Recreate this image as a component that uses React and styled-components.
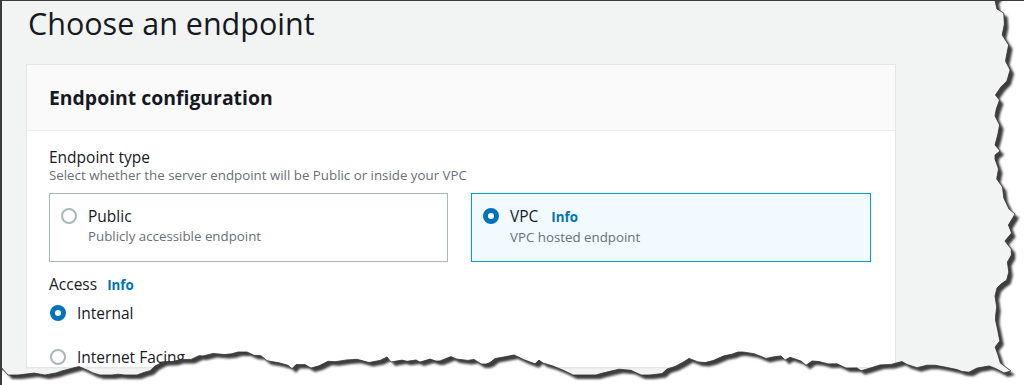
import React from 'react'
import styled, { createGlobalStyle } from 'styled-components'

const GlobalStyle = createGlobalStyle`
  html, body {
    margin: 0;
    padding: 0;
    background: #ffffff;
  }
  body {
    font-family: "Open Sans", "Liberation Sans", Arial, sans-serif;
    color: #16191f;
  }
`

const Screen = styled.div`
  position: relative;
  width: 1024px;
  height: 385px;
  box-sizing: border-box;
  overflow: hidden;
  background: #f2f3f3;
  border-top: 1px solid #3a3a3a;
  border-left: 2px solid #3a3a3a;
`

const Title = styled.h1`
  margin: 0;
  padding: 0 0 0 26px;
  height: 64px;
  line-height: 44px;
  font-size: 30.5px;
  font-weight: 400;
  color: #16191f;
`

const Card = styled.section`
  margin-left: 25px;
  width: 868px;
  background: #ffffff;
  box-shadow: 0 0 0 1px #e4e6e6, 0 1px 1px rgba(0, 28, 36, 0.15);
`

const CardHeader = styled.div`
  height: 66px;
  box-sizing: border-box;
  padding: 0 22px;
  display: flex;
  align-items: center;
  background: #fafafa;
  border-bottom: 1px solid #eaeded;
  font-size: 19.4px;
  font-weight: 700;
  color: #16191f;
`

const CardBody = styled.div`
  padding: 16px 22px 0;
  display: flex;
  flex-direction: column;
`

const FieldLabel = styled.div`
  display: flex;
  align-items: baseline;
  gap: 10px;
  font-size: 15.5px;
  line-height: 20px;
  color: #16191f;
`

const FieldHint = styled.div`
  font-size: 13.3px;
  line-height: 16px;
  color: #687078;
`

const Info = styled.span`
  font-size: 13.3px;
  font-weight: 700;
  color: #0073bb;
`

const Tiles = styled.div`
  margin-top: 10px;
  display: grid;
  grid-template-columns: 399px 400px;
  gap: 23px;
`

const Tile = styled.div`
  height: 69px;
  box-sizing: border-box;
  padding: 11px 12px 0 11px;
  display: flex;
  gap: 11px;
  border: 1px solid ${({ $selected }) => ($selected ? '#00a1c9' : '#aab7b8')};
  background: ${({ $selected }) => ($selected ? '#f1faff' : '#ffffff')};
`

const Radio = styled.span`
  flex: none;
  width: 16px;
  height: 16px;
  margin-top: ${({ $offset }) => $offset ?? 2}px;
  box-sizing: border-box;
  border-radius: 50%;
  background: #ffffff;
  border: ${({ $checked }) => ($checked ? '5px solid #0073bb' : '2px solid #aab7b8')};
`

const TileText = styled.div`
  display: flex;
  flex-direction: column;
`

const TileTitle = styled.div`
  display: flex;
  align-items: baseline;
  gap: 13px;
  font-size: 15.5px;
  line-height: 22px;
  color: #16191f;
`

const TileHint = styled(FieldHint)`
  line-height: 18px;
`

const AccessBlock = styled.div`
  margin-top: 12px;
  display: flex;
  flex-direction: column;
`

const Option = styled.label`
  margin-top: ${({ $gap }) => $gap}px;
  padding-left: 1px;
  display: flex;
  align-items: flex-start;
  gap: 11px;
  font-size: 15.5px;
  line-height: 20px;
  color: #16191f;
`

const Torn = styled.svg`
  position: absolute;
  top: -1px;
  left: -2px;
  pointer-events: none;
`

function makeEdge() {
  let s = 7919
  const rnd = () => {
    s = (s * 16807) % 2147483647
    return s / 2147483647
  }
  const pts = []
  let x = 999
  for (let y = 0; y < 368; y += 4 + Math.floor(rnd() * 8)) {
    x += (rnd() - 0.5) * 14
    x = Math.max(995, Math.min(1019, x))
    pts.push([x, y])
  }
  pts.push([1011, 371])
  let y = 371
  for (let px = 1004; px > 0; px -= 4 + Math.floor(rnd() * 9)) {
    y += (rnd() - 0.5) * 10
    y = Math.max(352, Math.min(375, y))
    pts.push([px, y])
  }
  pts.push([0, 366])
  return 'M -5 -5 L 999 -5 ' + pts.map(([a, b]) => `L ${a.toFixed(1)} ${b.toFixed(1)}`).join(' ') + ' L -5 366 Z'
}

const edge = makeEdge()

function TornEdge() {
  return (
    <Torn width="1024" height="385" viewBox="0 0 1024 385">
      <defs>
        <mask id="outside">
          <rect x="0" y="0" width="1024" height="385" fill="#fff" />
          <path d={edge} fill="#000" />
        </mask>
        <filter id="blur" x="-5%" y="-5%" width="110%" height="110%">
          <feGaussianBlur stdDeviation="1.3" />
        </filter>
      </defs>
      <g mask="url(#outside)">
        <rect x="0" y="0" width="1024" height="385" fill="#fff" />
        <path d={edge} fill="#3c3c3c" transform="translate(4 4)" filter="url(#blur)" />
      </g>
      <path d={edge} fill="none" stroke="#333" strokeWidth="0.8" />
    </Torn>
  )
}

export default function App() {
  return (
    <>
      <GlobalStyle />
      <Screen>
        <Title>Choose an endpoint</Title>
        <Card>
          <CardHeader>Endpoint configuration</CardHeader>
          <CardBody>
            <FieldLabel>Endpoint type</FieldLabel>
            <FieldHint>Select whether the server endpoint will be Public or inside your VPC</FieldHint>
            <Tiles>
              <Tile>
                <Radio $offset={3} />
                <TileText>
                  <TileTitle>Public</TileTitle>
                  <TileHint>Publicly accessible endpoint</TileHint>
                </TileText>
              </Tile>
              <Tile $selected>
                <Radio $checked $offset={3} />
                <TileText>
                  <TileTitle>
                    VPC <Info>Info</Info>
                  </TileTitle>
                  <TileHint>VPC hosted endpoint</TileHint>
                </TileText>
              </Tile>
            </Tiles>
            <AccessBlock>
              <FieldLabel>
                Access <Info>Info</Info>
              </FieldLabel>
              <Option $gap={8}>
                <Radio $checked />
                Internal
              </Option>
              <Option $gap={24}>
                <Radio />
                Internet Facing
              </Option>
            </AccessBlock>
          </CardBody>
        </Card>
        <TornEdge />
      </Screen>
    </>
  )
}
